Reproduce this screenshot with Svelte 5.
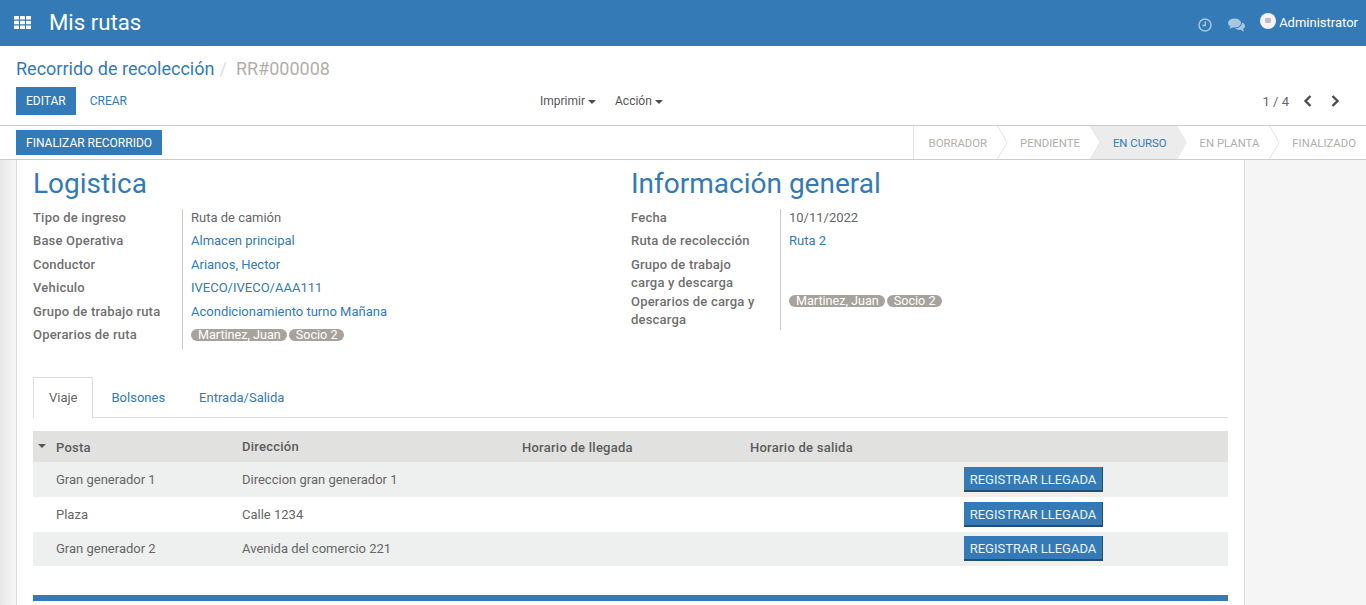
<script>
  const left = [
    { label: "Tipo de ingreso", value: "Ruta de camión" },
    { label: "Base Operativa", value: "Almacen principal", link: true },
    { label: "Conductor", value: "Arianos, Hector", link: true },
    { label: "Vehiculo", value: "IVECO/IVECO/AAA111", link: true },
    { label: "Grupo de trabajo ruta", value: "Acondicionamiento turno Mañana", link: true },
    { label: "Operarios de ruta", tags: ["Martinez, Juan", "Socio 2"] }
  ];
  const right = [
    { label: "Fecha", value: "10/11/2022" },
    { label: "Ruta de recolección", value: "Ruta 2", link: true },
    { label: "Grupo de trabajo carga y descarga", value: "", tight: true },
    { label: "Operarios de carga y descarga", tags: ["Martinez, Juan", "Socio 2"], tight: true }
  ];
  const steps = ["BORRADOR", "PENDIENTE", "EN CURSO", "EN PLANTA", "FINALIZADO"];
  const stops = [
    { posta: "Gran generador 1", dir: "Direccion gran generador 1" },
    { posta: "Plaza", dir: "Calle 1234" },
    { posta: "Gran generador 2", dir: "Avenida del comercio 221" }
  ];
</script>

{#snippet group(title, rows)}
  <div class="group">
    <h1>{title}</h1>
    <div class="fields">
      {#each rows as row}
        <div class="lbl" class:tight={row.tight}>{row.label}</div>
        <div class="val" class:link={row.link} class:tight={row.tight}>
          {#if row.tags}
            {#each row.tags as t}<span class="tag">{t}</span>{/each}
          {:else}
            {row.value}
          {/if}
        </div>
      {/each}
    </div>
  </div>
{/snippet}

<div class="page">
  <header class="nav">
    <svg class="apps" width="17" height="13" viewBox="0 0 17 13" fill="#fff">
      <rect x="0" y="0" width="5" height="3.5" rx=".6" /><rect x="6" y="0" width="5" height="3.5" rx=".6" /><rect x="12" y="0" width="5" height="3.5" rx=".6" />
      <rect x="0" y="4.75" width="5" height="3.5" rx=".6" /><rect x="6" y="4.75" width="5" height="3.5" rx=".6" /><rect x="12" y="4.75" width="5" height="3.5" rx=".6" />
      <rect x="0" y="9.5" width="5" height="3.5" rx=".6" /><rect x="6" y="9.5" width="5" height="3.5" rx=".6" /><rect x="12" y="9.5" width="5" height="3.5" rx=".6" />
    </svg>
    <span class="brand">Mis rutas</span>
    <div class="systray">
      <svg width="14" height="14" viewBox="0 0 14 14" fill="none" stroke="#a9c6e0" stroke-width="1.5">
        <circle cx="7" cy="7" r="6" /><path d="M7.3 3.5V7.4H4.4" />
      </svg>
      <svg class="chat" width="17" height="14" viewBox="0 0 17 14" fill="#a9c6e0">
        <ellipse cx="6.5" cy="5" rx="6.5" ry="4.6" /><path d="M2.5 8l-1 3 4-2z" />
        <path d="M14 4.5c2 .8 3 2.200 3 3.600 0 1.200-.7 2.200-1.800 3l.8 2.700-3.300-2c-2.200.3-4.200-.2-5.500-1.500 3.300-.1 6.800-2 6.800-5.800z" />
      </svg>
      <span class="user">
        <span class="avatar"><i></i></span>
        Administrator
      </span>
    </div>
  </header>

  <section class="control">
    <div class="crumbs">
      <a href="#top">Recorrido de recolección</a><span class="slash">/</span><span class="current">RR#000008</span>
    </div>
    <div class="actions">
      <div class="btns">
        <span class="btn primary">EDITAR</span>
        <span class="btn plain">CREAR</span>
      </div>
      <div class="menus">
        <span class="menu">Imprimir<b class="caret"></b></span>
        <span class="menu">Acción<b class="caret"></b></span>
      </div>
      <div class="pager">
        <span>1 / 4</span>
        <svg width="9" height="12" viewBox="0 0 9 12" fill="none" stroke="#4c4c4c" stroke-width="2.400"><path d="M7.500 1L2.500 6l5 5" /></svg>
        <svg width="9" height="12" viewBox="0 0 9 12" fill="none" stroke="#4c4c4c" stroke-width="2.400"><path d="M1.500 1l5 5-5 5" /></svg>
      </div>
    </div>
  </section>

  <section class="statusbar">
    <span class="btn primary finish">FINALIZAR RECORRIDO</span>
    <div class="steps">
      {#each steps as s, i}
        <span class="step" class:active={s === "EN CURSO"} class:first={i === 0}>
          {s}
          {#if i < steps.length - 1}
            <svg class="arrow" width="11" height="33" viewBox="0 0 11 33">
              <path d="M0 -1L10 16.500L0 34" />
            </svg>
          {/if}
        </span>
      {/each}
    </div>
  </section>

  <main class="content">
    <div class="sheet">
      <div class="groups">
        {@render group("Logistica", left)}
        {@render group("Información general", right)}
      </div>

      <div class="tabs">
        <span class="tab active">Viaje</span>
        <span class="tab">Bolsones</span>
        <span class="tab">Entrada/Salida</span>
      </div>

      <table>
        <thead>
          <tr>
            <th class="c1"><b class="sort"></b>Posta</th>
            <th class="c2">Dirección</th>
            <th class="c3">Horario de llegada</th>
            <th class="c4">Horario de salida</th>
            <th></th>
          </tr>
        </thead>
        <tbody>
          {#each stops as stop}
            <tr>
              <td class="c1">{stop.posta}</td>
              <td class="c2">{stop.dir}</td>
              <td></td>
              <td></td>
              <td class="cbtn"><span class="reg">REGISTRAR LLEGADA</span></td>
            </tr>
          {/each}
        </tbody>
      </table>

      <div class="blue"></div>
    </div>
  </main>
</div>

<style>
  :global(body) {
    margin: 0;
    overflow: hidden;
  }

  .page {
    width: 1366px;
    height: 605px;
    overflow: hidden;
    display: flex;
    flex-direction: column;
    font-family: Roboto, "Liberation Sans", sans-serif;
    font-size: 13px;
    color: #666;
    background: #fff;
  }

  .nav {
    height: 46px;
    flex: none;
    background: #337ab7;
    display: flex;
    align-items: center;
    padding: 0 8px 0 14px;
    color: #fff;
  }

  .apps {
    margin-top: -1px;
  }

  .brand {
    margin-left: 18px;
    font-size: 22.200px;
    margin-top: -3px;
  }

  .systray {
    margin-left: auto;
    display: flex;
    align-items: center;
  }

  .systray svg {
    margin-top: 4px;
  }

  .chat {
    margin-left: 16px;
  }

  .user {
    margin-left: 15px;
    display: flex;
    align-items: center;
    font-size: 13px;
    margin-top: -2px;
    gap: 3px;
  }

  .avatar {
    width: 16px;
    height: 16px;
    border-radius: 50%;
    background: #f3f3f3;
    display: flex;
    align-items: center;
    justify-content: center;
    margin-top: -3px;
  }

  .avatar i {
    width: 6px;
    height: 5px;
    background: #c5b8c4;
    border-radius: 1px;
  }

  .control {
    flex: none;
    height: 79px;
    padding: 0 8px 0 16px;
    border-bottom: 1px solid #ccc;
    box-sizing: content-box;
  }

  .crumbs {
    padding-top: 12px;
    height: 29px;
    font-size: 18px;
    line-height: 21px;
    color: #b4aea8;
  }

  .crumbs a {
    color: #337ab7;
    text-decoration: none;
  }

  .slash {
    margin: 0 9px 0 5px;
    color: #ddd;
  }

  .actions {
    display: grid;
    grid-template-columns: 524px 1fr auto;
    align-items: center;
    height: 28px;
  }

  .btns {
    display: flex;
  }

  .btn {
    font-size: 12px;
    display: inline-flex;
    align-items: center;
    box-sizing: border-box;
  }

  .primary {
    background: #337ab7;
    color: #fff;
    height: 28px;
    padding: 0 10px;
  }

  .plain {
    color: #337ab7;
    padding: 0 14px;
    margin-top: -1px;
  }

  .menus {
    display: flex;
    gap: 19px;
    font-size: 12px;
    color: #555;
  }

  .caret {
    display: inline-block;
    margin-left: 3px;
    vertical-align: middle;
    border-top: 4px solid #4c4c4c;
    border-left: 4px solid transparent;
    border-right: 4px solid transparent;
  }

  .pager {
    display: flex;
    align-items: center;
    gap: 14px;
    padding-right: 18px;
    font-size: 13px;
    color: #666;
  }

  .pager svg:last-child {
    margin-left: 5px;
  }

  .statusbar {
    flex: none;
    height: 33px;
    border-bottom: 1px solid #ccc;
    display: flex;
    justify-content: space-between;
    padding-left: 16px;
  }

  .finish {
    height: 25px;
    margin-top: 4px;
  }

  .steps {
    display: flex;
    border-left: 1px solid #e6e6e6;
  }

  .step {
    position: relative;
    display: flex;
    align-items: center;
    font-size: 11.350px;
    color: #b4aea8;
    padding: 0 10px 0 23px;
  }

  .step.first {
    padding-left: 15px;
  }

  .step.active {
    color: #337ab7;
    background: #ececec;
  }

  .arrow {
    position: absolute;
    top: 0;
    left: 100%;
    z-index: 1;
  }

  .arrow path {
    fill: #fff;
    stroke: #e2e2e2;
    stroke-width: 1;
  }

  .active .arrow path {
    fill: #ececec;
    stroke: none;
  }

  .content {
    flex: 1;
    min-height: 0;
    background: linear-gradient(to right, #e6e6e6, #f5f5f5 14px);
    background-color: #f5f5f5;
    padding-left: 16px;
  }

  .sheet {
    width: 1195px;
    height: 100%;
    background: #fff;
    border-left: 1px solid #ddd;
    border-right: 1px solid #ddd;
    padding: 0 16px;
    box-sizing: content-box;
  }

  .groups {
    display: grid;
    grid-template-columns: 598px 1fr;
  }

  h1 {
    margin: 0;
    padding-top: 7px;
    height: 41.800px;
    box-sizing: content-box;
    font-size: 28px;
    line-height: 34px;
    font-weight: 400;
    color: #337ab7;
  }

  .fields {
    display: grid;
    grid-template-columns: 149px 1fr;
    line-height: 18px;
    width: 450px;
  }

  .lbl {
    padding-right: 19px;
    padding-bottom: 5.500px;
    font-weight: 500;
    letter-spacing: 0.2px;
    color: #707070;
  }

  .val {
    border-left: 1px solid #ccc;
    padding-left: 8px;
    padding-bottom: 5.500px;
  }

  .lbl.tight,
  .val.tight {
    padding-bottom: 1px;
  }

  .link {
    color: #337ab7;
  }

  .tag {
    display: inline-block;
    background: #a8a29c;
    color: #fff;
    border-radius: 8px;
    padding: 0 6px 0 7px;
    line-height: 12px;
    height: 12px;
    font-size: 12.600px;
    margin-right: 2px;
    vertical-align: 0;
  }

  .val.tight .tag {
    vertical-align: 1px;
  }

  .tabs {
    display: flex;
    margin-top: 27px;
    height: 40px;
    border-bottom: 1px solid #ddd;
    box-sizing: content-box;
  }

  .tab {
    padding: 0 16px 0 18px;
    line-height: 41px;
    color: #337ab7;
    height: 40px;
  }

  .tab.active {
    color: #666;
    background: #fff;
    border: 1px solid #ddd;
    border-bottom: none;
    padding: 0 14px 0 15px;
    line-height: 40px;
    margin-right: 1px;
    margin-bottom: -1px;
    height: 41px;
    box-sizing: border-box;
  }

  table {
    width: 100%;
    margin-top: 13px;
    border-collapse: collapse;
    table-layout: fixed;
    font-size: 13px;
  }

  th {
    background: #e1e1df;
    font-weight: 500;
    letter-spacing: 0.25px;
    text-align: left;
    height: 29px;
    padding: 2px 0 0;
    box-sizing: border-box;
    color: #5c5c5c;
  }

  td {
    padding: 0;
    height: 35px;
  }

  tbody tr:last-child td {
    height: 34px;
  }

  tbody tr:nth-child(odd) {
    background: #eef0f0;
  }

  .c1 {
    width: 186px;
    padding-left: 23px;
    box-sizing: content-box;
  }

  th.c2 {
    padding-top: 0;
  }

  .c2 {
    width: 280px;
    box-sizing: border-box;
  }

  .c3 {
    width: 228px;
  }

  .c4 {
    width: 214px;
  }

  th.c1 {
    position: relative;
  }

  .sort {
    position: absolute;
    left: 5px;
    top: 13px;
    border-top: 4px solid #555;
    border-left: 4px solid transparent;
    border-right: 4px solid transparent;
  }

  .reg {
    display: inline-block;
    background: #337ab7;
    color: #eaf4fd;
    height: 25px;
    line-height: 25px;
    width: 139px;
    text-align: center;
    font-size: 13px;
    box-sizing: border-box;
    border-bottom: 2px solid #1f4e78;
    border-right: 1px solid #1f4e78;
    vertical-align: middle;
  }

  .blue {
    height: 6px;
    background: #337ab7;
    margin-top: 29px;
  }
</style>
